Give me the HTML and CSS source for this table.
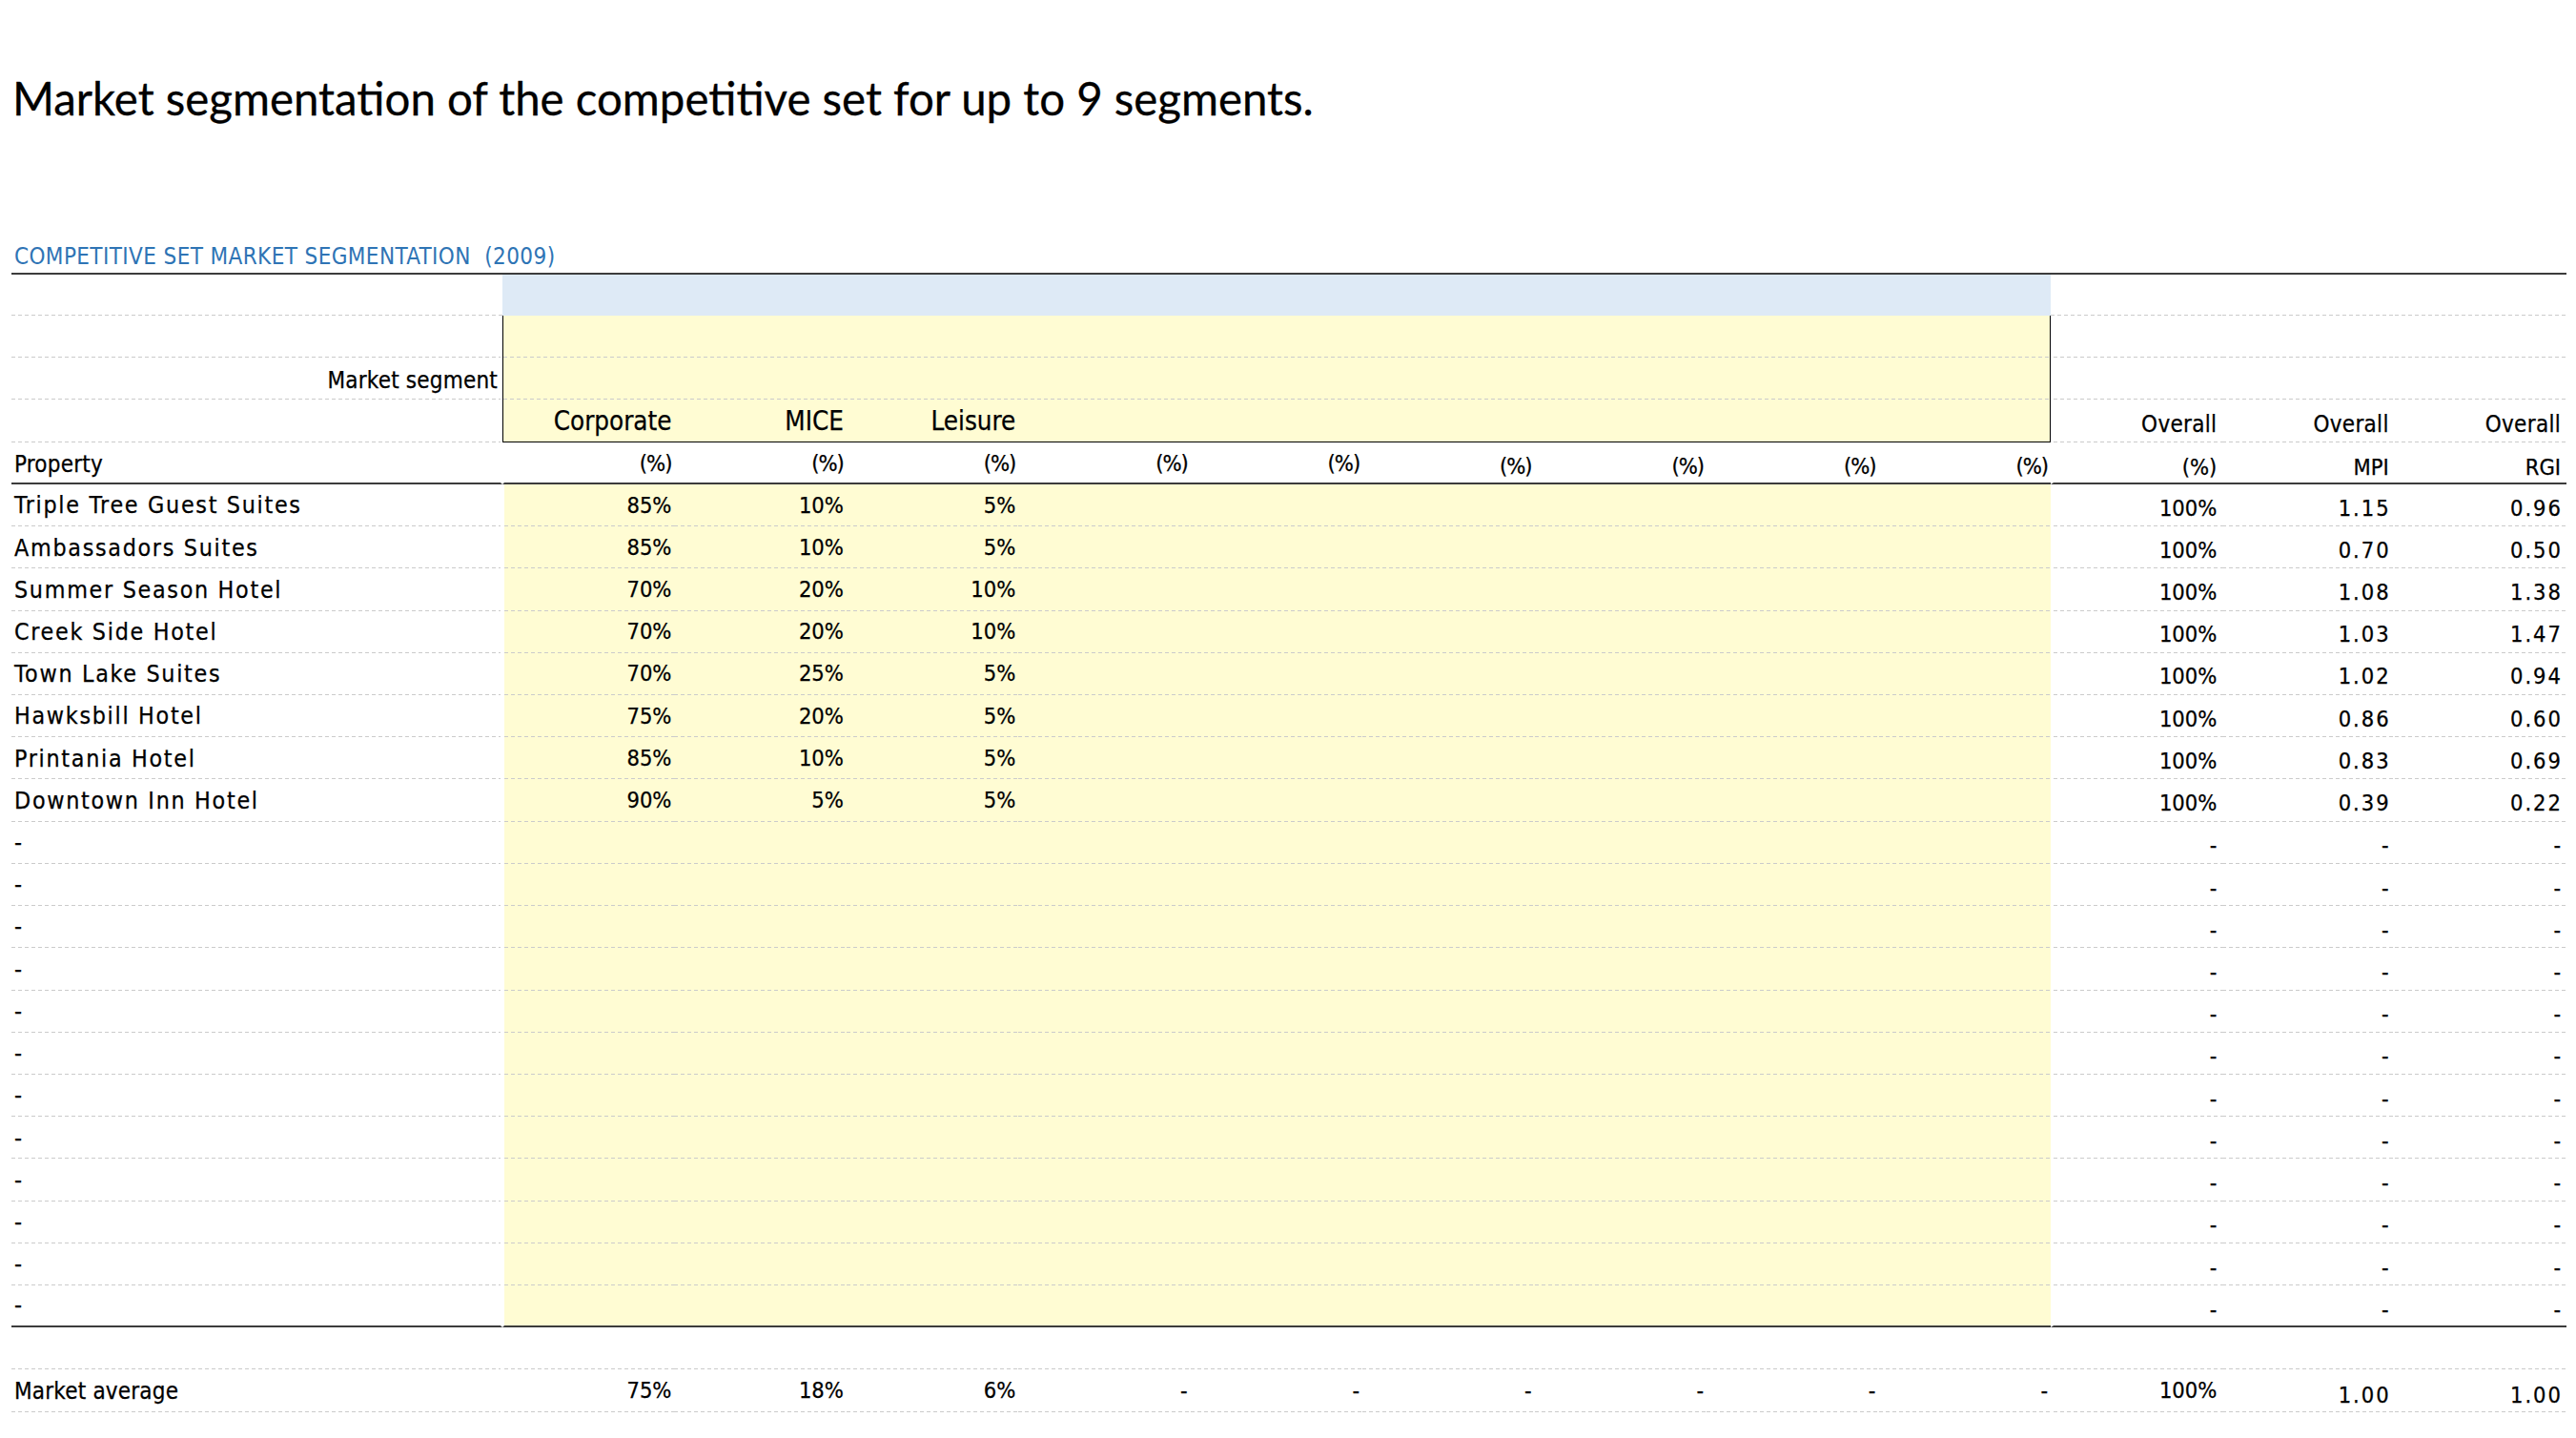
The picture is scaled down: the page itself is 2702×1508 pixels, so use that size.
FILE: index.html
```html
<!DOCTYPE html>
<html lang="en">
<head>
<meta charset="utf-8">
<title>Competitive set market segmentation</title>
<link rel="stylesheet" href="styles.css">
</head>
<body>
<main class="page">
  <h1 class="title">Market segmentation of the competitive set for up to 9 segments.</h1>
  <h2 class="section">COMPETITIVE SET MARKET SEGMENTATION&nbsp;&nbsp;(2009)</h2>
  <table class="sheet">
    <colgroup>
      <col class="c-prop">
      <col class="c-seg" span="9">
      <col class="c-ov" span="3">
    </colgroup>
    <tbody>
      <tr class="r-band">
        <td class="p"></td>
        <td class="band" colspan="9"></td>
        <td class="o"></td><td class="o"></td><td class="o"></td>
      </tr>
      <tr>
        <td class="p"></td>
        <td class="s y bx-l bx-r" colspan="9"></td>
        <td class="o o1"></td><td class="o"></td><td class="o"></td>
      </tr>
      <tr>
        <td class="p hdr mseg">Market segment</td>
        <td class="s y bx-l bx-r" colspan="9"></td>
        <td class="o o1"></td><td class="o"></td><td class="o"></td>
      </tr>
      <tr class="r-seg">
        <td class="p"></td>
        <td class="s y bx-b bx-l segname">Corporate</td>
        <td class="s y bx-b segname">MICE</td>
        <td class="s y bx-b segname">Leisure</td>
        <td class="s y bx-b"></td>
        <td class="s y bx-b"></td>
        <td class="s y bx-b"></td>
        <td class="s y bx-b"></td>
        <td class="s y bx-b"></td>
        <td class="s y bx-b bx-r"></td>
        <td class="o o1 ovh">Overall</td><td class="o ovh">Overall</td><td class="o ovh">Overall</td>
      </tr>
      <tr class="rule r-unit">
        <td class="p hdr">Property</td>
        <td class="s s1 unit">(%)</td>
        <td class="s unit">(%)</td>
        <td class="s unit">(%)</td>
        <td class="s unit">(%)</td>
        <td class="s unit">(%)</td>
        <td class="s unit lo">(%)</td>
        <td class="s unit lo">(%)</td>
        <td class="s unit lo">(%)</td>
        <td class="s unit lo">(%)</td>
        <td class="o o1 unit">(%)</td><td class="o unit">MPI</td><td class="o unit">RGI</td>
      </tr>
      <tr>
        <td class="p name">Triple Tree Guest Suites</td>
        <td class="s s1 y num">85%</td><td class="s y num">10%</td><td class="s y num">5%</td>
        <td class="s y"></td><td class="s y"></td><td class="s y"></td><td class="s y"></td><td class="s y"></td><td class="s y"></td>
        <td class="o o1 num">100%</td><td class="o dec">1.15</td><td class="o dec">0.96</td>
      </tr>
      <tr>
        <td class="p name">Ambassadors Suites</td>
        <td class="s s1 y num">85%</td><td class="s y num">10%</td><td class="s y num">5%</td>
        <td class="s y"></td><td class="s y"></td><td class="s y"></td><td class="s y"></td><td class="s y"></td><td class="s y"></td>
        <td class="o o1 num">100%</td><td class="o dec">0.70</td><td class="o dec">0.50</td>
      </tr>
      <tr>
        <td class="p name">Summer Season Hotel</td>
        <td class="s s1 y num">70%</td><td class="s y num">20%</td><td class="s y num">10%</td>
        <td class="s y"></td><td class="s y"></td><td class="s y"></td><td class="s y"></td><td class="s y"></td><td class="s y"></td>
        <td class="o o1 num">100%</td><td class="o dec">1.08</td><td class="o dec">1.38</td>
      </tr>
      <tr>
        <td class="p name">Creek Side Hotel</td>
        <td class="s s1 y num">70%</td><td class="s y num">20%</td><td class="s y num">10%</td>
        <td class="s y"></td><td class="s y"></td><td class="s y"></td><td class="s y"></td><td class="s y"></td><td class="s y"></td>
        <td class="o o1 num">100%</td><td class="o dec">1.03</td><td class="o dec">1.47</td>
      </tr>
      <tr>
        <td class="p name">Town Lake Suites</td>
        <td class="s s1 y num">70%</td><td class="s y num">25%</td><td class="s y num">5%</td>
        <td class="s y"></td><td class="s y"></td><td class="s y"></td><td class="s y"></td><td class="s y"></td><td class="s y"></td>
        <td class="o o1 num">100%</td><td class="o dec">1.02</td><td class="o dec">0.94</td>
      </tr>
      <tr>
        <td class="p name">Hawksbill Hotel</td>
        <td class="s s1 y num">75%</td><td class="s y num">20%</td><td class="s y num">5%</td>
        <td class="s y"></td><td class="s y"></td><td class="s y"></td><td class="s y"></td><td class="s y"></td><td class="s y"></td>
        <td class="o o1 num">100%</td><td class="o dec">0.86</td><td class="o dec">0.60</td>
      </tr>
      <tr>
        <td class="p name">Printania Hotel</td>
        <td class="s s1 y num">85%</td><td class="s y num">10%</td><td class="s y num">5%</td>
        <td class="s y"></td><td class="s y"></td><td class="s y"></td><td class="s y"></td><td class="s y"></td><td class="s y"></td>
        <td class="o o1 num">100%</td><td class="o dec">0.83</td><td class="o dec">0.69</td>
      </tr>
      <tr>
        <td class="p name">Downtown Inn Hotel</td>
        <td class="s s1 y num">90%</td><td class="s y num">5%</td><td class="s y num">5%</td>
        <td class="s y"></td><td class="s y"></td><td class="s y"></td><td class="s y"></td><td class="s y"></td><td class="s y"></td>
        <td class="o o1 num">100%</td><td class="o dec">0.39</td><td class="o dec">0.22</td>
      </tr>
      <tr>
        <td class="p name">-</td>
        <td class="s s1 y"></td><td class="s y"></td><td class="s y"></td><td class="s y"></td><td class="s y"></td><td class="s y"></td><td class="s y"></td><td class="s y"></td><td class="s y"></td>
        <td class="o o1 num">-</td><td class="o num">-</td><td class="o num">-</td>
      </tr>
      <tr>
        <td class="p name">-</td>
        <td class="s s1 y"></td><td class="s y"></td><td class="s y"></td><td class="s y"></td><td class="s y"></td><td class="s y"></td><td class="s y"></td><td class="s y"></td><td class="s y"></td>
        <td class="o o1 num">-</td><td class="o num">-</td><td class="o num">-</td>
      </tr>
      <tr>
        <td class="p name">-</td>
        <td class="s s1 y"></td><td class="s y"></td><td class="s y"></td><td class="s y"></td><td class="s y"></td><td class="s y"></td><td class="s y"></td><td class="s y"></td><td class="s y"></td>
        <td class="o o1 num">-</td><td class="o num">-</td><td class="o num">-</td>
      </tr>
      <tr>
        <td class="p name">-</td>
        <td class="s s1 y"></td><td class="s y"></td><td class="s y"></td><td class="s y"></td><td class="s y"></td><td class="s y"></td><td class="s y"></td><td class="s y"></td><td class="s y"></td>
        <td class="o o1 num">-</td><td class="o num">-</td><td class="o num">-</td>
      </tr>
      <tr>
        <td class="p name">-</td>
        <td class="s s1 y"></td><td class="s y"></td><td class="s y"></td><td class="s y"></td><td class="s y"></td><td class="s y"></td><td class="s y"></td><td class="s y"></td><td class="s y"></td>
        <td class="o o1 num">-</td><td class="o num">-</td><td class="o num">-</td>
      </tr>
      <tr>
        <td class="p name">-</td>
        <td class="s s1 y"></td><td class="s y"></td><td class="s y"></td><td class="s y"></td><td class="s y"></td><td class="s y"></td><td class="s y"></td><td class="s y"></td><td class="s y"></td>
        <td class="o o1 num">-</td><td class="o num">-</td><td class="o num">-</td>
      </tr>
      <tr>
        <td class="p name">-</td>
        <td class="s s1 y"></td><td class="s y"></td><td class="s y"></td><td class="s y"></td><td class="s y"></td><td class="s y"></td><td class="s y"></td><td class="s y"></td><td class="s y"></td>
        <td class="o o1 num">-</td><td class="o num">-</td><td class="o num">-</td>
      </tr>
      <tr>
        <td class="p name">-</td>
        <td class="s s1 y"></td><td class="s y"></td><td class="s y"></td><td class="s y"></td><td class="s y"></td><td class="s y"></td><td class="s y"></td><td class="s y"></td><td class="s y"></td>
        <td class="o o1 num">-</td><td class="o num">-</td><td class="o num">-</td>
      </tr>
      <tr>
        <td class="p name">-</td>
        <td class="s s1 y"></td><td class="s y"></td><td class="s y"></td><td class="s y"></td><td class="s y"></td><td class="s y"></td><td class="s y"></td><td class="s y"></td><td class="s y"></td>
        <td class="o o1 num">-</td><td class="o num">-</td><td class="o num">-</td>
      </tr>
      <tr>
        <td class="p name">-</td>
        <td class="s s1 y"></td><td class="s y"></td><td class="s y"></td><td class="s y"></td><td class="s y"></td><td class="s y"></td><td class="s y"></td><td class="s y"></td><td class="s y"></td>
        <td class="o o1 num">-</td><td class="o num">-</td><td class="o num">-</td>
      </tr>
      <tr>
        <td class="p name">-</td>
        <td class="s s1 y"></td><td class="s y"></td><td class="s y"></td><td class="s y"></td><td class="s y"></td><td class="s y"></td><td class="s y"></td><td class="s y"></td><td class="s y"></td>
        <td class="o o1 num">-</td><td class="o num">-</td><td class="o num">-</td>
      </tr>
      <tr class="rule">
        <td class="p name">-</td>
        <td class="s s1 y"></td><td class="s y"></td><td class="s y"></td><td class="s y"></td><td class="s y"></td><td class="s y"></td><td class="s y"></td><td class="s y"></td><td class="s y"></td>
        <td class="o o1 num">-</td><td class="o num">-</td><td class="o num">-</td>
      </tr>
      <tr>
        <td class="p"></td>
        <td class="s s1"></td><td class="s"></td><td class="s"></td><td class="s"></td><td class="s"></td><td class="s"></td><td class="s"></td><td class="s"></td><td class="s"></td>
        <td class="o o1"></td><td class="o"></td><td class="o"></td>
      </tr>
      <tr class="r-avg">
        <td class="p hdr">Market average</td>
        <td class="s s1 num">75%</td><td class="s num">18%</td><td class="s num">6%</td>
        <td class="s num">-</td><td class="s num">-</td><td class="s num">-</td><td class="s num">-</td><td class="s num">-</td><td class="s num">-</td>
        <td class="o o1 num">100%</td><td class="o dec low">1.00</td><td class="o dec low">1.00</td>
      </tr>
    </tbody>
  </table>
</main>
</body>
</html>
```

FILE: styles.css
```css
* {
  box-sizing: border-box;
}

html, body {
  margin: 0;
  background: #ffffff;
  color: #000000;
}

body {
  font-family: "DejaVu Sans Condensed", "DejaVu Sans", Verdana, sans-serif;
  font-stretch: semi-condensed;
}

.page {
  padding: 0 10px 0 12px;
}

.title {
  font-family: Lato, "Open Sans", sans-serif;
  font-stretch: normal;
  font-weight: 400;
  font-size: 47.4px;
  line-height: 48px;
  margin: 79px 0 0 1px;
  color: #000;
  white-space: nowrap;
  -webkit-text-stroke: 0.3px #000;
}

.section {
  font-weight: 400;
  font-size: 24px;
  line-height: 24px;
  margin: 130px 0 0 3px;
  color: #2e74b5;
  letter-spacing: 0.4px;
  white-space: nowrap;
}

.sheet {
  margin-top: 5px;
  border-collapse: separate;
  border-spacing: 0;
  table-layout: fixed;
  width: 2680px;
}

.c-prop { width: 515px; }
.c-seg { width: 180.44px; }
.c-ov { width: 180.33px; }

.sheet tr { height: 44.22px; }
.sheet tr.r-band { height: 45px; }

.sheet td {
  padding: 0 3px 10px 3px;
  vertical-align: bottom;
  text-align: right;
  white-space: nowrap;
  font-size: 23.5px;
  line-height: 1;
  -webkit-text-stroke: 0.25px #000;
  background-image: repeating-linear-gradient(90deg, #cbcbcb 0 4px, transparent 4px 7px);
  background-repeat: no-repeat;
  background-size: 100% 1px;
  background-position: left bottom;
}

.sheet td.p {
  text-align: left;
  padding-left: 3px;
  border-right: 2px solid #fff;
}

.sheet td.s1 { border-left: 2px solid #fff; }
.sheet td.o1 { border-left: 3px solid #fff; }
.sheet td.o { padding-right: 6px; padding-bottom: 7px; }

.sheet .y { background-color: #fffcd3; }

/* top band */
.r-band td {
  border-top: 2px solid #3c3c3c;
}
.r-band td.p { border-right: 0; }
.sheet td.band {
  background-color: #deeaf6;
  background-image: none;
}

/* yellow input box */
.sheet td.bx-l { border-left: 1px solid #000; }
.sheet td.bx-r { border-right: 1px solid #000; }
.sheet td.bx-b {
  border-bottom: 1px solid #000;
  background-image: none;
}

/* solid rules */
.sheet tr.rule td {
  border-bottom: 2px solid #3c3c3c;
  background-image: none;
  padding-bottom: 8px;
}
.sheet tr.rule td.o { padding-bottom: 5px; }

/* text styles */
.sheet td.name {
  font-size: 24.8px;
  letter-spacing: 1.7px;
  padding-bottom: 9px;
}

.sheet td.hdr {
  font-size: 24px;
  letter-spacing: 0.2px;
}
.sheet td.mseg {
  text-align: right;
  padding-right: 3px;
  padding-bottom: 8px;
}

.sheet td.segname {
  font-size: 27.5px;
  padding-bottom: 7.5px;
}

.sheet td.ovh {
  font-size: 24px;
  letter-spacing: 0.3px;
  padding-bottom: 7px;
}

.sheet tr.r-unit td { padding-bottom: 7px; }
.sheet tr.r-unit td.lo { padding-bottom: 4px; }
.sheet tr.r-unit td.o { padding-bottom: 3px; }
.sheet td.unit { font-size: 23.5px; letter-spacing: -1px; }
.sheet td.o.unit { font-size: 23.5px; letter-spacing: 0; }

.sheet td.num { font-size: 23.5px; }
.sheet td.dec {
  font-size: 23.5px;
  letter-spacing: 2px;
  padding-right: 4px;
}

.sheet tr.r-avg td { padding-bottom: 10px; }
.sheet tr.r-avg td.low { padding-bottom: 5px; }
```
